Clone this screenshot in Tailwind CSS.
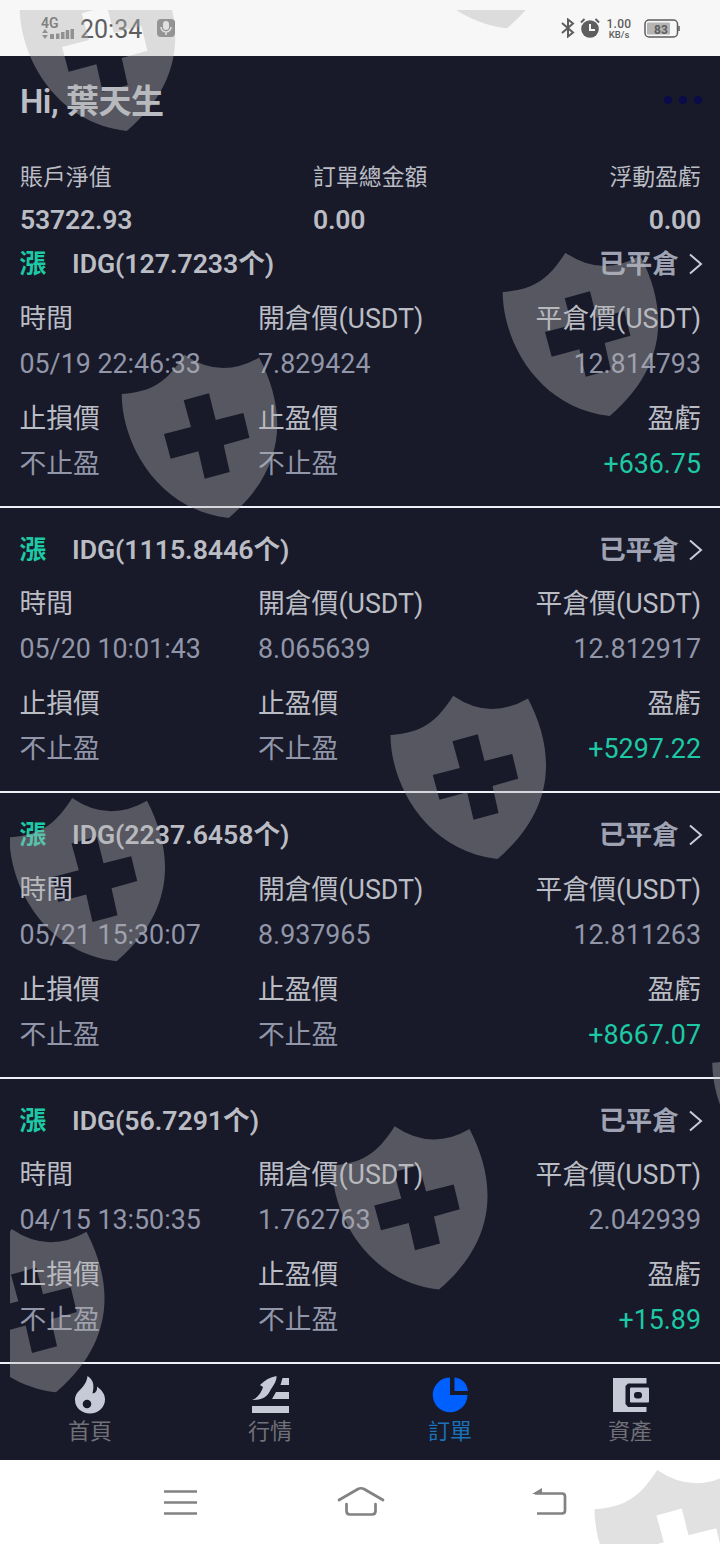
<!doctype html>
<html lang="zh-Hant">
	<head>
		<meta charset="UTF-8" />
		<meta name="viewport" content="width=device-width, initial-scale=1.0" />
		<title>訂單</title>
		<script src="https://cdn.jsdelivr.net/npm/@tailwindcss/browser@4"></script>
	</head>
	<body class="bg-white">
		<div
			class="relative flex h-[1544px] w-[720px] flex-col overflow-hidden bg-[#181929] font-['Roboto','Noto_Sans_CJK_TC',sans-serif] text-[#bbbdc4]"
		>
			<!-- Status bar -->
			<div
				class="flex h-14 shrink-0 items-center justify-between bg-[#f7f7f7] pr-[39px] pl-[41px] text-[#5e5e5e]"
			>
				<div class="flex items-center">
					<div class="flex w-[33px] flex-col">
						<span class="h-[12px] text-[14px] leading-[12px] font-semibold">4G</span>
						<svg class="h-[11px] w-[33px]" viewBox="0 0 33 11" fill="#7a7a7a">
							<path d="M1 4l3-4 3 4zM1 6l3 4 3-4z" />
							<path
								d="M9 5h4v5H9zM15 4.500h3.500v5.500h-3.500zM20 3h3.500v7h-3.500zM24.700 1h3.500v9h-3.500zM29.500 -1h3.500v11h-3.500z"
							/>
						</svg>
					</div>
					<span class="ml-[6px] w-[76px] pt-[3px] text-[25px] leading-[30px]"
						>20:34</span
					>
					<svg class="h-5 w-[20px]" viewBox="0 0 20 20">
						<rect x="1" y="1" width="18" height="18" rx="4" fill="#7f7f7f" />
						<rect x="7" y="3" width="6" height="9" rx="3" fill="#fff" />
						<path
							d="M5 9a5 5 0 0 0 10 0M10 14v3"
							fill="none"
							stroke="#fff"
							stroke-width="1.500"
						/>
					</svg>
				</div>
				<div class="flex items-center">
					<svg
						class="h-5 w-[14px]"
						viewBox="0 0 14 20"
						fill="none"
						stroke="currentColor"
						stroke-width="2"
					>
						<path d="M1 5l11 9.500-5 4V1.500l5 4L1 15" />
					</svg>
					<svg class="ml-[5px] h-[20px] w-[20px]" viewBox="0 0 20 20">
						<circle cx="10" cy="11" r="8.800" fill="currentColor" />
						<path
							d="M1 4.500L4.500 1M19 4.500L15.500 1"
							stroke="currentColor"
							stroke-width="2"
						/>
						<path
							d="M10 6v6h5"
							fill="none"
							stroke="#f7f7f7"
							stroke-width="2"
						/>
					</svg>
					<div class="ml-[6px] flex w-[26px] flex-col items-center font-medium">
						<span class="text-[12px] leading-[12px] tracking-[.3px]">1.00</span>
						<span class="text-[9.500px] leading-[9px]">KB/s</span>
					</div>
					<svg class="ml-[12px] h-[20px] w-[37px]" viewBox="0 0 37 20">
						<rect
							x="1"
							y="2"
							width="32.500"
							height="17"
							rx="4"
							fill="none"
							stroke="currentColor"
							stroke-width="1.500"
						/>
						<rect x="3" y="4.500" width="23" height="12" rx="1" fill="#b5b5b5" />
						<path d="M35 8v5" stroke="currentColor" stroke-width="1.500" />
						<text
							x="17"
							y="15.500"
							text-anchor="middle"
							font-size="12"
							font-weight="700"
							fill="currentColor"
						>
							83
						</text>
					</svg>
				</div>
			</div>

			<!-- Greeting and totals -->
			<header class="h-[166px] shrink-0 pr-[19px] pl-5">
				<div class="flex h-[88px] items-center justify-between">
					<h1
						class="pt-[3px] text-[33px] leading-[44px] font-semibold tracking-[-.5px]"
					>
						Hi, 葉天生
					</h1>
					<div class="-mr-px flex gap-[7px]">
						<span class="h-2 w-2 rounded-sm bg-[#0b0b4a]"></span>
						<span class="h-2 w-2 rounded-sm bg-[#0b0b4a]"></span>
						<span class="h-2 w-2 rounded-sm bg-[#0b0b4a]"></span>
					</div>
				</div>
				<div
					class="mt-[14px] grid grid-cols-[293px_1fr_auto] text-[22.900px] leading-[40px]"
				>
					<div>
						<p>賬戶淨值</p>
						<p class="text-[26.600px] leading-[44px] font-semibold tracking-[-.2px]">53722.93</p>
					</div>
					<div>
						<p>訂單總金額</p>
						<p class="text-[26.600px] leading-[44px] font-semibold tracking-[-.2px]">0.00</p>
					</div>
					<div class="text-right">
						<p>浮動盈虧</p>
						<p class="text-[26.600px] leading-[44px] font-semibold tracking-[-.2px]">0.00</p>
					</div>
				</div>
			</header>

			<!-- Orders -->
			<main id="orders" class="h-[1142px] shrink-0"></main>

			<!-- Tabs -->
			<nav
				class="grid h-24 shrink-0 grid-cols-4 text-[22px] leading-[30px] text-[#707178]"
			>
				<div class="flex flex-col items-center pt-[11px]">
					<svg class="h-10 w-10" viewBox="0 0 40 40">
						<path
							d="M17.500 1c6 4 7 9 5 17.500 3 0 5-3 4.500-7 4 3 8 7 8 13 0 8-7 14-15 14S5 33 5 25c0-10 11-11 12.500-24z"
							fill="#c5cad6"
						/>
						<circle cx="17" cy="29" r="4.300" fill="#181929" />
					</svg>
					<span class="mt-[2px]">首頁</span>
				</div>
				<div class="flex flex-col items-center pt-[11px]">
					<svg class="h-10 w-10" viewBox="0 0 40 40" fill="#c5cad6">
						<path
							d="M26.500 1C27 7 22 12 20 16c-3 6-8 9-18 9 4-1 9-6 11-13l-3-2c5-5 10-8 16.500-9z"
						/>
						<path
							d="M32.500 3H39v7h-8.500zM26 17h13v7H22zM2 31h37v7H2z"
						/>
					</svg>
					<span class="mt-[2px]">行情</span>
				</div>
				<div class="flex flex-col items-center pt-[11px] text-[#1b72b8]">
					<svg class="h-10 w-10" viewBox="0 0 40 40" fill="#0060ff">
						<path d="M20 2.500v17.500h17.500A17.400 17.400 0 1 1 20 2.500z" />
						<path d="M24.500 2.500C32 3 37.500 9 37.800 16H24.500z" />
					</svg>
					<span class="mt-[2px]">訂單</span>
				</div>
				<div class="flex flex-col items-center pt-[11px]">
					<svg class="h-10 w-10" viewBox="0 0 40 40">
						<path
							d="M3 3h33.500v5.500H18L15.500 11v18l2.500 3h18.500v5H3z"
							fill="#c5cad6"
						/>
						<rect x="20" y="12.500" width="19" height="15" rx="1" fill="#c5cad6" />
						<rect x="24" y="17" width="8" height="6.500" rx="3" fill="#181929" />
					</svg>
					<span class="mt-[2px]">資產</span>
				</div>
			</nav>

			<!-- System navigation -->
			<div
				class="flex h-[84px] shrink-0 items-center justify-between bg-white pr-[152px] pl-[162px]"
			>
				<svg
					class="h-[36px] w-[36px]"
					viewBox="0 0 36 36"
					fill="none"
					stroke="#828282"
					stroke-width="2.700"
				>
					<path d="M2 7.500h33M2 18.500h33M2 29.500h33" />
				</svg>
				<svg
					class="mr-[9px] h-[36px] w-[48px]"
					viewBox="0 0 48 36"
					fill="none"
					stroke="#828282"
					stroke-width="2.700"
					stroke-linecap="round"
				>
					<path
						d="M2 16L21 5q3-1.500 6 0l19 11M9.500 20v7q0 3.500 3.500 3.500h22q3.500 0 3.500-3.500v-7"
					/>
				</svg>
				<svg
					class="h-[36px] w-[36px]"
					viewBox="0 0 36 36"
					fill="none"
					stroke="#828282"
					stroke-width="2.700"
				>
					<path d="M3 9.500h27q3 0 3 3v14q0 3-3 3H5" />
					<path d="M0 10l10-6v6z" fill="#828282" stroke="none" />
				</svg>
			</div>

			<!-- Shield watermark over the whole screen -->
			<svg
				class="pointer-events-none absolute inset-0 h-[1544px] w-[720px]"
				viewBox="0 0 720 1544"
			>
				<defs>
					<clipPath id="area"><path d="M10 10h710v1534H10z" /></clipPath>
					<path
						id="shield"
						fill-rule="evenodd"
						d="M0 39.300C32 37 46 26 62.700 0Q99 25 137.500 2.700C164 54 167 112 107 163.300C35 155 0 88 0 39.300zM62 45.600l7.300 26.700-27 7 6.700 24.700 27.700-7.400L83 124l25-6.700-6-27 25.700-7.300-6-24.700L94 65.300l-6.700-26.700z"
					/>
				</defs>
				<g clip-path="url(#area)" fill="#b4b4b4" fill-opacity=".4">
					<use href="#shield" x="19.700" y="-32.300" />
					<use href="#shield" x="400" y="-135" />
					<use href="#shield" x="502.700" y="252.700" />
					<use href="#shield" x="121.700" y="354.700" />
					<use href="#shield" x="390.500" y="695.700" />
					<use href="#shield" x="9.500" y="798" />
					<use href="#shield" x="712.300" y="1023.400" />
					<use href="#shield" x="332" y="1126.300" />
					<use href="#shield" x="-51" y="1229" />
					<use href="#shield" x="594.500" y="1470" />
				</g>
			</svg>
		</div>

		<script>
			const orders = [
				{ amount: '127.7233', time: '05/19 22:46:33', open: '7.829424', close: '12.814793', profit: '+636.75' },
				{ amount: '1115.8446', time: '05/20 10:01:43', open: '8.065639', close: '12.812917', profit: '+5297.22' },
				{ amount: '2237.6458', time: '05/21 15:30:07', open: '8.937965', close: '12.811263', profit: '+8667.07' },
				{ amount: '56.7291', time: '04/15 13:50:35', open: '1.762763', close: '2.042939', profit: '+15.89' },
			];

			document.getElementById('orders').innerHTML = orders
				.map(
					(order) => `
				<section class="h-[285.5px] border-b-2 border-[#eef0f8] pr-[19px] pl-[19.5px] pt-[22px] text-[26.8px]">
					<div class="-mr-[2px] flex h-10 items-center text-[26.7px] leading-10 font-semibold">
						<span class="w-[52.5px] font-bold text-[#1dc9a4]">漲</span>
						<span class="tracking-[-.05px]">IDG(${order.amount}个)</span>
						<span class="ml-auto text-[#9ea2b2]">已平倉</span>
						<svg class="ml-[9px] h-6 w-[15px]" viewBox="0 0 15 24" fill="none" stroke="#c9ccd6" stroke-width="2">
							<path d="M2 2.500l11 9.500-11 9.500" />
						</svg>
					</div>
					<div class="mt-[12.8px] grid grid-cols-[238.5px_1fr_auto] leading-[45px]">
						<div>
							<p>時間</p>
							<p class="text-[#9196a8]">${order.time}</p>
						</div>
						<div>
							<p>開倉價(USDT)</p>
							<p class="text-[#9196a8]">${order.open}</p>
						</div>
						<div class="text-right">
							<p>平倉價(USDT)</p>
							<p class="text-[#9196a8]">${order.close}</p>
						</div>
					</div>
					<div class="mt-[10px] grid grid-cols-[238.5px_1fr_auto] leading-[45px]">
						<div>
							<p>止損價</p>
							<p class="text-[#9196a8]">不止盈</p>
						</div>
						<div>
							<p>止盈價</p>
							<p class="text-[#9196a8]">不止盈</p>
						</div>
						<div class="text-right">
							<p>盈虧</p>
							<p class="text-[#1dc9a4]">${order.profit}</p>
						</div>
					</div>
				</section>`
				)
				.join('');
		</script>
	</body>
</html>
